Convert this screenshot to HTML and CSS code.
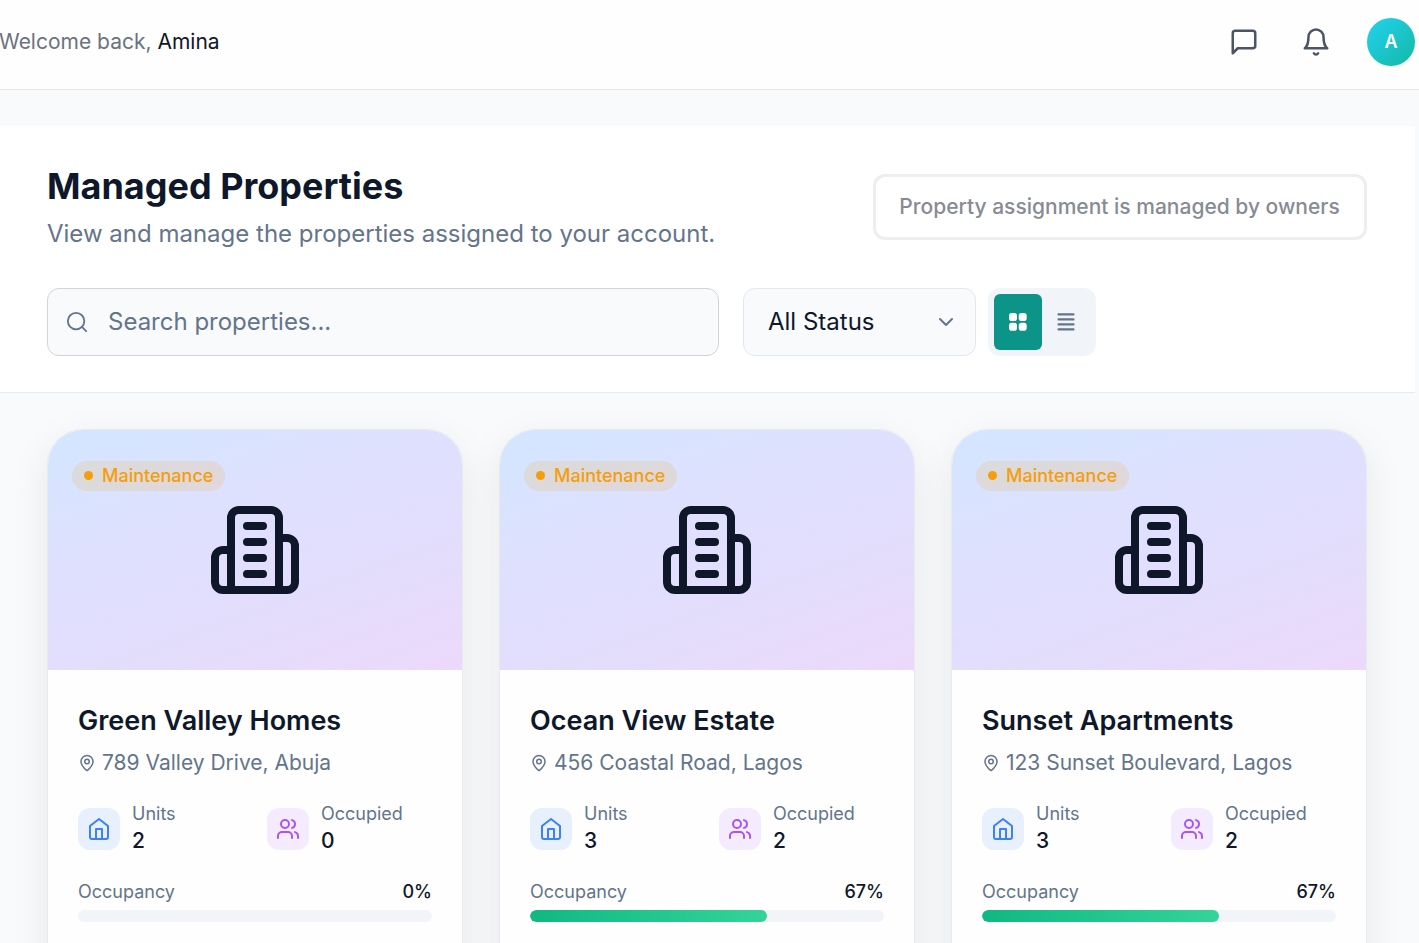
FILE: index.html
```html
<!DOCTYPE html>
<html lang="en">
<head>
<meta charset="utf-8">
<title>Managed Properties</title>
<link rel="stylesheet" href="styles.css">
</head>
<body>
<svg class="sprite" aria-hidden="true">
  <symbol id="building" viewBox="0 0 24 24"><path d="M6 22V4a2 2 0 0 1 2-2h8a2 2 0 0 1 2 2v18Z"/><path d="M6 12H4a2 2 0 0 0-2 2v6a2 2 0 0 0 2 2h2"/><path d="M18 9h2a2 2 0 0 1 2 2v9a2 2 0 0 1-2 2h-2"/><path d="M10 6h4M10 10h4M10 14h4M10 18h4"/></symbol>
  <symbol id="pin" viewBox="0 0 24 24"><path d="M20 10c0 4.99-5.54 10.19-7.4 11.8a1 1 0 0 1-1.2 0C9.54 20.19 4 14.99 4 10a8 8 0 0 1 16 0"/><circle cx="12" cy="10" r="3"/></symbol>
  <symbol id="house" viewBox="0 0 24 24"><path d="m3 9 9-7 9 7v11a2 2 0 0 1-2 2H5a2 2 0 0 1-2-2z"/><path d="M9 22V12h6v10"/></symbol>
  <symbol id="users" viewBox="0 0 24 24"><path d="M16 21v-2a4 4 0 0 0-4-4H6a4 4 0 0 0-4 4v2"/><circle cx="9" cy="7" r="4"/><path d="M22 21v-2a4 4 0 0 0-3-3.87M16 3.13a4 4 0 0 1 0 7.75"/></symbol>
</svg>
<header class="topbar">
  <p class="welcome">Welcome back, <span class="name">Amina</span></p>
  <div class="actions">
    <svg class="icon icon-top" viewBox="0 0 24 24"><path d="M21 15a2 2 0 0 1-2 2H7l-4 4V5a2 2 0 0 1 2-2h14a2 2 0 0 1 2 2z"/></svg>
    <svg class="icon icon-top" viewBox="0 0 24 24"><path d="M6 8a6 6 0 0 1 12 0c0 7 3 9 3 9H3s3-2 3-9"/><path d="M10.3 21a1.94 1.94 0 0 0 3.4 0"/></svg>
    <div class="avatar">A</div>
  </div>
</header>
<main class="page">
  <section class="panel">
    <div class="heading">
      <div>
        <h1 class="title">Managed Properties</h1>
        <p class="subtitle">View and manage the properties assigned to your account.</p>
      </div>
      <div class="notice">Property assignment is managed by owners</div>
    </div>
    <div class="filters">
      <div class="search">
        <svg class="icon icon-search" viewBox="0 0 24 24"><circle cx="11" cy="11" r="9"/><path d="m22 22-4.6-4.6"/></svg>
        <span class="field-text">Search properties...</span>
      </div>
      <div class="select">
        <span class="field-text">All Status</span>
        <svg class="icon icon-chevron" viewBox="0 0 24 24"><path d="m6 9 6 6 6-6"/></svg>
      </div>
      <div class="toggle">
        <div class="view view-active"><svg class="icon-view" viewBox="0 0 18 18"><rect width="8" height="8" rx="2.8"/><rect x="9.7" width="8" height="8" rx="2.8"/><rect y="9.7" width="8" height="8" rx="2.8"/><rect x="9.7" y="9.7" width="8" height="8" rx="2.8"/></svg></div>
        <div class="view"><svg class="icon-view" viewBox="0 0 18 18"><rect x=".5" y=".2" width="17" height="2.4" rx=".8"/><rect x=".5" y="5.2" width="17" height="2.4" rx=".8"/><rect x=".5" y="10.2" width="17" height="2.4" rx=".8"/><rect x=".5" y="15.2" width="17" height="2.4" rx=".8"/></svg></div>
      </div>
    </div>
  </section>
  <section class="cards">
    <article class="card">
      <div class="cover"><span class="badge">Maintenance</span><svg class="icon icon-building"><use href="#building"/></svg></div>
      <div class="body">
        <h2 class="card-title">Green Valley Homes</h2>
        <p class="address"><svg class="icon icon-pin"><use href="#pin"/></svg>789 Valley Drive, Abuja</p>
        <div class="stats">
          <div class="stat"><div class="tile tile-blue"><svg class="icon icon-stat"><use href="#house"/></svg></div><div><div class="label">Units</div><div class="value">2</div></div></div>
          <div class="stat"><div class="tile tile-purple"><svg class="icon icon-stat"><use href="#users"/></svg></div><div><div class="label">Occupied</div><div class="value">0</div></div></div>
        </div>
        <div class="occupancy"><span class="label">Occupancy</span><span class="percent">0%</span></div>
        <div class="track"><div class="fill" style="width:0%"></div></div>
      </div>
    </article>
    <article class="card">
      <div class="cover"><span class="badge">Maintenance</span><svg class="icon icon-building"><use href="#building"/></svg></div>
      <div class="body">
        <h2 class="card-title">Ocean View Estate</h2>
        <p class="address"><svg class="icon icon-pin"><use href="#pin"/></svg>456 Coastal Road, Lagos</p>
        <div class="stats">
          <div class="stat"><div class="tile tile-blue"><svg class="icon icon-stat"><use href="#house"/></svg></div><div><div class="label">Units</div><div class="value">3</div></div></div>
          <div class="stat"><div class="tile tile-purple"><svg class="icon icon-stat"><use href="#users"/></svg></div><div><div class="label">Occupied</div><div class="value">2</div></div></div>
        </div>
        <div class="occupancy"><span class="label">Occupancy</span><span class="percent">67%</span></div>
        <div class="track"><div class="fill" style="width:67%"></div></div>
      </div>
    </article>
    <article class="card">
      <div class="cover"><span class="badge">Maintenance</span><svg class="icon icon-building"><use href="#building"/></svg></div>
      <div class="body">
        <h2 class="card-title">Sunset Apartments</h2>
        <p class="address"><svg class="icon icon-pin"><use href="#pin"/></svg>123 Sunset Boulevard, Lagos</p>
        <div class="stats">
          <div class="stat"><div class="tile tile-blue"><svg class="icon icon-stat"><use href="#house"/></svg></div><div><div class="label">Units</div><div class="value">3</div></div></div>
          <div class="stat"><div class="tile tile-purple"><svg class="icon icon-stat"><use href="#users"/></svg></div><div><div class="label">Occupied</div><div class="value">2</div></div></div>
        </div>
        <div class="occupancy"><span class="label">Occupancy</span><span class="percent">67%</span></div>
        <div class="track"><div class="fill" style="width:67%"></div></div>
      </div>
    </article>
  </section>
</main>
</body>
</html>
```
FILE: styles.css
```css
* { box-sizing: border-box; margin: 0; }
html { height: 100%; overflow: hidden; }
body { height: 943px; overflow: hidden; background: #f8fafc; color: #0f172a; font-family: Inter, "Liberation Sans", sans-serif; }
.sprite { display: none; }
.icon { display: block; flex: none; fill: none; stroke: currentColor; stroke-width: 2; stroke-linecap: round; stroke-linejoin: round; }

.topbar { display: flex; align-items: center; justify-content: space-between; height: 90px; padding: 0 4px 6px 0; background: #fefefe; border-bottom: 1px solid #e5e7eb; }
.welcome { margin-left: -1px; font-size: 21px; line-height: 30px; color: #6b7280; }
.name { color: #111827; }
.actions { display: flex; align-items: center; color: #4b5563; }
.icon-top { width: 30px; height: 30px; margin-right: 42px; }
.icon-top + .avatar { margin-left: -6px; }
.avatar { display: flex; align-items: center; justify-content: center; width: 48px; height: 48px; border-radius: 50%; background: linear-gradient(135deg, #22d3ee, #14b8a6); color: #fff; font-size: 18px; font-weight: 600; }

.page { width: 1415px; padding-top: 36px; }
.panel { height: 267px; padding: 36px 48px 0 47px; background: #fff; border-bottom: 1px solid #e9ebee; }
.heading { display: flex; justify-content: space-between; height: 126px; }
.title { font-size: 36px; line-height: 48px; font-weight: 700; }
.subtitle { font-size: 24px; line-height: 36px; margin-top: 6px; color: #64748b; }
.notice { display: flex; align-items: center; justify-content: center; width: 494px; height: 66px; margin-top: 12px; padding: 0 1px 2px 0; border: 3px solid #eee; border-radius: 12px; color: #878b93; font-size: 21px; font-weight: 500; }
.filters { display: flex; height: 68px; }
.search { display: flex; align-items: center; width: 672px; padding-left: 18px; gap: 20px; border: 1px solid #d1d5db; border-radius: 12px; background: #f8fafc; color: #64748b; font-size: 24px; }
.field-text { padding-bottom: 2px; }
.icon-search { width: 22px; height: 22px; }
.select { display: flex; align-items: center; justify-content: space-between; width: 233px; margin-left: 24px; padding: 0 17px 0 24px; border: 1px solid #e2e8f0; border-radius: 12px; background: #f8fafc; font-size: 24px; }
.icon-chevron { width: 24px; height: 24px; color: #64748b; }
.toggle { display: flex; width: 108px; margin-left: 12px; padding: 6px; border-radius: 12px; background: #f1f5f9; color: #64748b; }
.view { display: flex; align-items: center; justify-content: center; width: 48px; height: 56px; border-radius: 6px; }
.view-active { background: #0d9488; color: #fff; }
.icon-view { width: 18px; height: 18px; fill: currentColor; }

.cards { display: grid; grid-template-columns: repeat(3, 416px); gap: 36px; padding: 36px 0 0 47px; }
.card { height: 580px; overflow: hidden; border: 1px solid #e8ebee; border-radius: 36px; background: #fefefe; box-shadow: 0 12px 38px rgba(0, 0, 0, .08); }
.cover { position: relative; display: flex; align-items: center; justify-content: center; height: 240px; background: linear-gradient(160deg, #d3e6ff, #dfe0fe 40%, #e4ddfc 70%, #ecd9fc); }
.icon-building { width: 96px; height: 96px; }
.badge { position: absolute; left: 24px; top: 31px; display: flex; align-items: center; gap: 9px; height: 30px; padding: 0 12px 1px; border-radius: 15px; background: rgba(245, 158, 11, .15); color: #f59e0b; font-size: 18px; font-weight: 500; }
.badge::before { content: ""; width: 9px; height: 9px; border-radius: 50%; background: #f59e0b; }
.body { padding: 30px 30px 0; }
.card-title { font-size: 27px; line-height: 42px; font-weight: 600; }
.address { display: flex; align-items: center; gap: 6px; margin-top: 6px; font-size: 21px; line-height: 30px; color: #64748b; }
.icon-pin { width: 18px; height: 18px; }
.stats { display: grid; grid-template-columns: 1fr 1fr; gap: 24px; margin-top: 24px; }
.stat { display: flex; align-items: center; gap: 12px; }
.tile { display: flex; align-items: center; justify-content: center; width: 42px; height: 42px; border-radius: 12px; }
.tile-blue { background: #e8f0fe; color: #3b82f6; }
.tile-purple { background: #f4ebfe; color: #a855f7; }
.icon-stat { width: 24px; height: 24px; }
.label { font-size: 18px; line-height: 24px; color: #64748b; }
.value { font-size: 21px; line-height: 30px; font-weight: 500; }
.occupancy { display: flex; justify-content: space-between; margin-top: 24px; }
.percent { font-size: 18px; line-height: 24px; font-weight: 500; }
.track { height: 12px; margin-top: 6px; overflow: hidden; border-radius: 6px; background: #f1f5f9; }
.fill { height: 12px; border-radius: 6px; background: linear-gradient(90deg, #10b981, #34d399); }
```
